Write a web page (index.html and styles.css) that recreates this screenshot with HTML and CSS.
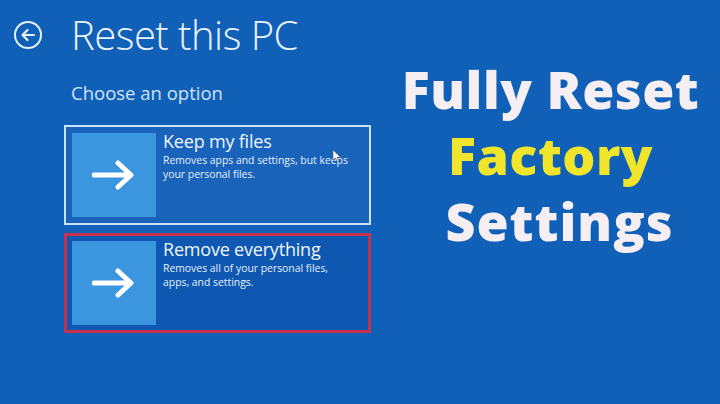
FILE: index.html
```html
<!DOCTYPE html>
<html>
<head>
<meta charset="utf-8">
<link rel="stylesheet" href="styles.css">
</head>
<body>
<div class="screen">
  <div class="left">
    <div class="header">
      <svg class="back" width="30" height="30" viewBox="0 0 30 30">
        <circle cx="15" cy="15" r="13" fill="none" stroke="#e8f1fb" stroke-width="2"/>
        <path d="M21 15 H9.5 M14.5 10 L9.5 15 L14.5 20" fill="none" stroke="#e8f1fb" stroke-width="2.2" stroke-linecap="round" stroke-linejoin="round"/>
      </svg>
      <h1 class="title">Reset this PC</h1>
    </div>
    <div class="subtitle">Choose an option</div>
    <div class="options">
      <div class="card card-keep">
        <div class="tile">
          <svg width="44" height="30" viewBox="0 0 44 30">
            <path d="M2 15 H38 M26 3 L39 15 L26 27" fill="none" stroke="#ffffff" stroke-width="5" stroke-linecap="round" stroke-linejoin="round"/>
          </svg>
        </div>
        <div class="text">
          <div class="card-title">Keep my files</div>
          <div class="card-desc">Removes apps and settings, but keeps<br>your personal files.</div>
        </div>
        <svg class="cursor" width="10" height="14" viewBox="0 0 10 14">
          <path d="M1 1 L1 11 L3.5 8.8 L5.5 13 L7 12.3 L5 8.2 L8.5 8.2 Z" fill="#ffffff" stroke="#555" stroke-width="0.6"/>
        </svg>
      </div>
      <div class="card card-remove">
        <div class="tile">
          <svg width="44" height="30" viewBox="0 0 44 30">
            <path d="M2 15 H38 M26 3 L39 15 L26 27" fill="none" stroke="#ffffff" stroke-width="5" stroke-linecap="round" stroke-linejoin="round"/>
          </svg>
        </div>
        <div class="text">
          <div class="card-title">Remove everything</div>
          <div class="card-desc">Removes all of your personal files,<br>apps, and settings.</div>
        </div>
      </div>
    </div>
  </div>
  <div class="right">
    <div class="big">Fully Reset</div>
    <div class="big yellow">Factory</div>
    <div class="big shifted">Settings</div>
  </div>
</div>
</body>
</html>
```

FILE: styles.css
```css
html, body {
  margin: 0;
  padding: 0;
}
body {
  background: #1160b8;
  font-family: "Open Sans", "Noto Sans", sans-serif;
  color: #e8f1fb;
}
.screen {
  width: 720px;
  height: 404px;
  display: flex;
  overflow: hidden;
  background: #1160b8;
}
.left {
  width: 371px;
  padding: 10px 0 0 13px;
  box-sizing: border-box;
  flex: none;
}
.header {
  display: flex;
  align-items: center;
  gap: 28px;
}
.back {
  flex: none;
  margin-top: 0;
}
.title {
  margin: 0;
  font-weight: 300;
  font-size: 40px;
  line-height: 50px;
  letter-spacing: -0.5px;
  color: #eaf2fb;
}
.subtitle {
  margin: 20px 0 0 58px;
  font-size: 18.5px;
  font-weight: 400;
  line-height: 26px;
  color: #cfe3f6;
}
.options {
  margin: 19px 0 0 51px;
  display: flex;
  flex-direction: column;
  gap: 8px;
}
.card {
  position: relative;
  width: 307px;
  height: 100px;
  box-sizing: border-box;
  display: flex;
  align-items: flex-start;
}
.card-keep {
  border: 2px solid #c9e2f7;
  background: #1a63ba;
  padding: 6px 6px;
}
.card-remove {
  border: 3px solid #c62f4e;
  background: #0f58b2;
  padding: 5px 5px;
}
.tile {
  width: 84px;
  height: 84px;
  background: #3c95df;
  display: flex;
  align-items: center;
  justify-content: center;
  flex: none;
}
.text {
  margin-left: 7px;
  margin-top: -4px;
}
.card-title {
  font-size: 18px;
  line-height: 24px;
  color: #eef5fc;
  font-weight: 400;
  letter-spacing: -0.2px;
}
.card-desc {
  font-size: 10.4px;
  line-height: 14px;
  color: #e6f0fa;
}
.cursor {
  position: absolute;
  left: 266px;
  top: 22px;
}
.right {
  flex: 1;
  display: flex;
  flex-direction: column;
  align-items: center;
  padding: 56px 0 0 10px;
}
.big {
  font-family: "Open Sans", "Noto Sans", sans-serif;
  font-weight: 800;
  font-size: 52px;
  line-height: 66px;
  color: #f5eef2;
  white-space: nowrap;
  letter-spacing: 0.5px;
}
.shifted {
  margin-left: 18px;
  letter-spacing: 1px;
}
.yellow {
  color: #f1e52c;
}
```
